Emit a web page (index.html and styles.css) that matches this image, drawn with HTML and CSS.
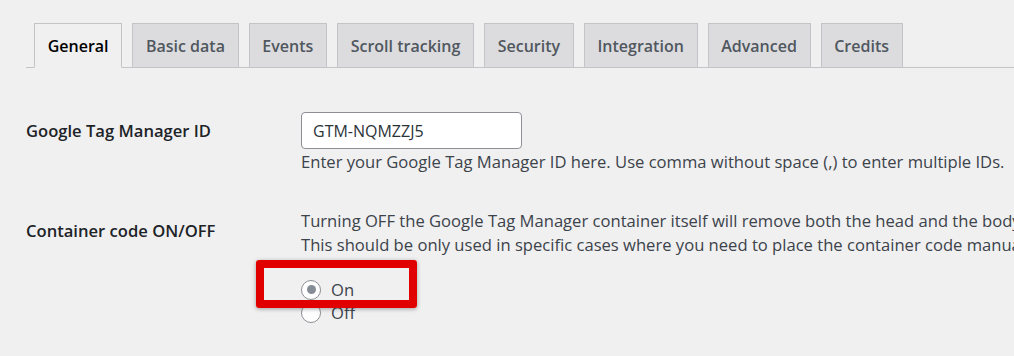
FILE: index.html
```html
<!DOCTYPE html>
<html lang="en">
<head>
    <meta charset="UTF-8">
    <title>Google Tag Manager for WordPress options</title>
    <link rel="stylesheet" href="styles.css">
</head>
<body>
    <div class="wrap">
        <nav class="nav-tabs">
            <a href="#" class="nav-tab active">General</a>
            <a href="#" class="nav-tab">Basic data</a>
            <a href="#" class="nav-tab">Events</a>
            <a href="#" class="nav-tab">Scroll tracking</a>
            <a href="#" class="nav-tab">Security</a>
            <a href="#" class="nav-tab">Integration</a>
            <a href="#" class="nav-tab">Advanced</a>
            <a href="#" class="nav-tab">Credits</a>
        </nav>

        <div class="form-table">
            <div class="form-row row-id">
                <label class="row-label" for="gtm-id">Google Tag Manager ID</label>
                <div class="row-field">
                    <input type="text" id="gtm-id" class="text-input" value="GTM-NQMZZJ5">
                    <p class="description">Enter your Google Tag Manager ID here. Use comma without space (,) to enter multiple IDs.</p>
                </div>
            </div>

            <div class="form-row row-container">
                <span class="row-label">Container code ON/OFF</span>
                <div class="row-field">
                    <p class="description">Turning OFF the Google Tag Manager container itself will remove both the head and the body part of the container code but leave data layer codes working.<br>This should be only used in specific cases where you need to place the container code manually or using another tool.</p>
                    <div class="radio-group">
                        <label class="radio"><input type="radio" name="container" checked> On</label>
                        <label class="radio"><input type="radio" name="container"> Off</label>
                        <div class="highlight"></div>
                    </div>
                </div>
            </div>
        </div>
    </div>
</body>
</html>
```

FILE: styles.css
```css
:root {
    --bg-color: #f0f0f1;
    --tab-bg: #dcdcde;
    --border-color: #c3c4c7;
    --text-color: #1d2327;
    --muted-color: #3c434a;
    --tab-text: #50575e;
    --mark-color: #e10000;
}

* {
    margin: 0;
    padding: 0;
    box-sizing: border-box;
}

body {
    background-color: var(--bg-color);
    font-family: 'Open Sans', 'Noto Sans', sans-serif;
    font-size: 16.6px;
    color: var(--text-color);
    overflow: hidden;
}

.wrap {
    padding: 23px 0 0 26px;
}

/* Abas */
.nav-tabs {
    display: flex;
    gap: 10px;
    padding-left: 8px;
    border-bottom: 1px solid var(--border-color);
}

.nav-tab {
    display: block;
    height: 45px;
    margin-bottom: -1px;
    padding: 0 12.7px;
    line-height: 44px;
    border: 1px solid var(--border-color);
    background-color: var(--tab-bg);
    color: var(--tab-text);
    font-size: 16px;
    font-weight: 600;
    text-decoration: none;
    white-space: nowrap;
}

.nav-tab.active {
    background-color: var(--bg-color);
    border-bottom-color: var(--bg-color);
    color: #000;
}

/* Tabela do formulário */
.form-table {
    margin-top: 44px;
}

.form-row {
    display: grid;
    grid-template-columns: 275px 1fr;
}

.row-label {
    font-weight: 600;
    line-height: 24px;
}

.row-id .row-label {
    padding-top: 7px;
}

.row-container {
    margin-top: 35px;
}

.row-container .row-label {
    padding-top: 10px;
}

.text-input {
    display: block;
    width: 221px;
    height: 37px;
    padding: 0 11px;
    border: 1px solid #8c8f94;
    border-radius: 4px;
    background: #fff;
    color: #2c3338;
    font-family: inherit;
    font-size: 16px;
}

.description {
    color: var(--muted-color);
    line-height: 24px;
    white-space: nowrap;
}

.row-id .description {
    margin-top: 1px;
}

/* Botões de rádio */
.radio-group {
    position: relative;
    margin-top: 21px;
}

.radio {
    display: flex;
    align-items: center;
    gap: 10px;
    height: 23px;
    color: var(--muted-color);
}

.radio input {
    -webkit-appearance: none;
    appearance: none;
    width: 20px;
    height: 20px;
    border: 1px solid #8c8f94;
    border-radius: 50%;
    background: #fff;
    display: grid;
    place-content: center;
}

.radio input:checked::before {
    content: "";
    width: 9px;
    height: 9px;
    border-radius: 50%;
    background-color: #878d96;
}

/* Marcação vermelha por cima */
.highlight {
    position: absolute;
    left: -45px;
    top: -18px;
    width: 161px;
    height: 48px;
    border: 8px solid var(--mark-color);
    border-radius: 3px;
    box-shadow: 0 1px 4px rgba(0, 0, 0, 0.35);
}
```
